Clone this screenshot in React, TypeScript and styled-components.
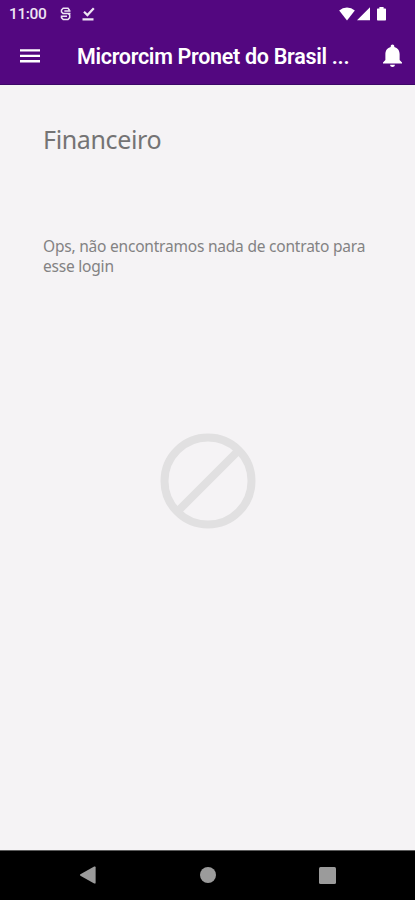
import React from 'react';
import styled, { createGlobalStyle } from 'styled-components';

const GlobalStyle = createGlobalStyle`
  * { box-sizing: border-box; }
  body { margin: 0; background: #f5f3f5; }
`;

const Screen = styled.div`
  width: 100%;
  height: 100vh;
  display: flex;
  flex-direction: column;
  overflow: hidden;
  background: #f5f3f5;
  font-family: Roboto, sans-serif;
`;

const TopArea = styled.div`
  flex: none;
  height: 85px;
  background: #530780;
  border-bottom: 1px solid #3d0768;
  color: #fff;
`;

const StatusBar = styled.div`
  height: 27px;
  padding: 0 28px 0 9px;
  display: flex;
  align-items: center;
  justify-content: space-between;
  color: #eee4f3;
`;

const StatusGroup = styled.div<{ $gap: number }>`
  display: flex;
  align-items: center;
  gap: ${(p) => p.$gap}px;
`;

const Clock = styled.span`
  width: 38px;
  margin: 2px 3px 0 0;
  font-size: 15.5px;
  font-weight: 500;
  line-height: 25px;
  letter-spacing: -0.4px;
`;

const AppBar = styled.header`
  height: 57px;
  padding: 0 13px 0 20px;
  display: flex;
  align-items: center;
`;

const Title = styled.h1`
  flex: 1;
  margin: 2px 0 0 37px;
  font-size: 21.5px;
  font-weight: 600;
  line-height: 55px;
  letter-spacing: -0.3px;
  white-space: nowrap;
`;

const IconButton = styled.button`
  padding: 0;
  border: 0;
  background: none;
  color: inherit;
  display: flex;
`;

const Icon = styled.svg`
  display: block;
  flex: none;
`;

const Content = styled.main`
  flex: 1;
  display: flex;
  flex-direction: column;
  padding: 36px 40px 0 43px;
  color: #7b7a7b;
  font-family: 'Noto Sans', sans-serif;
`;

const Heading = styled.h2`
  margin: 0;
  font-size: 25px;
  font-weight: 400;
  line-height: 36px;
  letter-spacing: -0.35px;
  color: #747374;
`;

const Message = styled.p`
  margin: 79px 0 0;
  font-size: 15.5px;
  font-weight: 400;
  line-height: 20px;
  letter-spacing: -0.21px;
  color: #838283;
`;

const EmptyMark = styled.div`
  display: flex;
  justify-content: center;
  margin: 156.5px 3px 0 0;
`;

const NavBar = styled.nav`
  flex: none;
  height: 50px;
  padding-bottom: 1px;
  display: grid;
  grid-template-columns: 80px 16px 104px 16px 103px 17px;
  align-items: center;
  border-top: 1px solid #5c5c5c;
  background: #000;
  color: #9b9b9b;
`;

const NavButton = styled(IconButton)<{ $column: number }>`
  grid-column: ${(p) => p.$column};
  justify-content: center;
`;

export default function App() {
  return (
    <>
      <GlobalStyle />
      <Screen>
        <TopArea>
          <StatusBar>
            <StatusGroup $gap={10}>
              <Clock>11:00</Clock>
              <Icon width="12" height="14" viewBox="0 0 12 14" fill="none" stroke="currentColor" strokeWidth="1.5">
                <path d="M9.5 3.2L8 1.2H3.2L1.5 3V5L3 6.4H10.5M1.5 8.6V10.6L3.2 12.4H8L9.7 10.6V8L8 6.4M4.3 3.9H10.5M1 9.2H7" />
              </Icon>
              <Icon width="13" height="14" viewBox="0 0 13 14" fill="none" stroke="currentColor" strokeWidth="2.2">
                <path d="M2 4.8L5.4 8.1L11.8 1.2M.5 12.3H11.5" />
              </Icon>
            </StatusGroup>
            <StatusGroup $gap={2}>
              <Icon width="16" height="14" viewBox="0 0 16 14" fill="#fff">
                <path d="M8 13.5L.2 3.6Q3.5.5 8 .5T15.8 3.6Z" />
              </Icon>
              <Icon width="13" height="14" viewBox="0 0 13 14" fill="#fff">
                <path d="M0 13.3L13 .3V13.3Z" />
              </Icon>
              <Icon width="15" height="14" viewBox="0 0 15 14" fill="#fff">
                <path d="M5 2.2Q5 1.5 5.7 1.5H7.4V0H11.6V1.5H13.3Q14 1.5 14 2.2V12.8Q14 13.6 13.3 13.6H5.7Q5 13.6 5 12.8Z" />
              </Icon>
            </StatusGroup>
          </StatusBar>
          <AppBar>
            <IconButton aria-label="Menu">
              <Icon width="20" height="14" viewBox="0 0 20 14" fill="currentColor">
                <path d="M0 .2H20V2.6H0ZM0 5.7H20V8.1H0ZM0 11.1H20V13.5H0Z" />
              </Icon>
            </IconButton>
            <Title>Microrcim Pronet do Brasil ...</Title>
            <IconButton aria-label="Notificações">
              <Icon width="19" height="23" viewBox="4 2 16 20" preserveAspectRatio="none" fill="currentColor">
                <path d="M12 22c1.1 0 2-.9 2-2h-4c0 1.1.89 2 2 2zm6-6v-5c0-3.07-1.64-5.64-4.5-6.32V4c0-.83-.67-1.5-1.5-1.5s-1.5.67-1.5 1.5v.68C7.63 5.36 6 7.92 6 11v5l-2 2v1h16v-1l-2-2z" />
              </Icon>
            </IconButton>
          </AppBar>
        </TopArea>
        <Content>
          <Heading>Financeiro</Heading>
          <Message>
            Ops, não encontramos nada de contrato para
            <br />
            esse login
          </Message>
          <EmptyMark>
            <Icon width="96" height="96" viewBox="0 0 96 96" fill="none" stroke="#e1e0e1" strokeWidth="8">
              <path d="M18 78L78 18" />
              <circle cx="48" cy="48" r="43.5" />
            </Icon>
          </EmptyMark>
        </Content>
        <NavBar>
          <NavButton $column={2} aria-label="Voltar">
            <Icon width="16" height="18" viewBox="0 0 16 18" fill="currentColor">
              <path d="M.4 8.3Q-.4 9 .4 9.7L14.2 17.4Q15.6 18 15.6 16.7V1.3Q15.6 0 14.2.6Z" />
            </Icon>
          </NavButton>
          <NavButton $column={4} aria-label="Início">
            <Icon width="16" height="16" viewBox="0 0 16 16" fill="currentColor">
              <circle cx="8" cy="8" r="8" />
            </Icon>
          </NavButton>
          <NavButton $column={6} aria-label="Recentes">
            <Icon width="17" height="17" viewBox="0 0 17 17" fill="currentColor">
              <rect width="17" height="17" rx="1.5" />
            </Icon>
          </NavButton>
        </NavBar>
      </Screen>
    </>
  );
}
